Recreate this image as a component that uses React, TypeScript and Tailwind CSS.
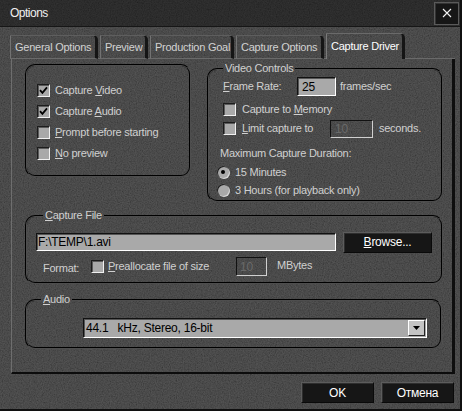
import type { ReactNode } from "react";

function Key({ children }: { children: ReactNode }) {
  return <span className="underline underline-offset-[1px]">{children}</span>;
}

function Check({ checked = false }: { checked?: boolean }) {
  return (
    <span className="flex h-[13px] w-[13px] shrink-0 items-center justify-center border border-t-[#1c1c1c] border-l-[#1c1c1c] border-r-[#f0f0f0] border-b-[#f0f0f0] bg-[#a9a9a9] shadow-[inset_1px_1px_0_#5a5a5a]">
      {checked && (
        <svg width="9" height="9" viewBox="0 0 9 9">
          <path d="M1 4.2 L3.4 6.8 L8 1.4" stroke="#000" strokeWidth="1.8" fill="none" />
        </svg>
      )}
    </span>
  );
}

function Radio({ on = false }: { on?: boolean }) {
  return (
    <span className="flex h-[12px] w-[12px] shrink-0 items-center justify-center rounded-full bg-[#a9a9a9] shadow-[inset_1px_1px_0_#1c1c1c,1px_1px_0_#d8d8d8]">
      {on && <span className="h-[4px] w-[4px] rounded-full bg-black" />}
    </span>
  );
}

function Tab({ label, w, active = false }: { label: string; w: string; active?: boolean }) {
  return active ? (
    <div
      className={`flex h-[26px] ${w} shrink-0 items-center rounded-tr-[5px] border-t border-l border-r-[3px] border-t-[#6a6a6a] border-l-[#7a7a7a] border-r-[#151515] pl-[4px] pb-px text-white`}
    >
      {label}
    </div>
  ) : (
    <div
      className={`flex h-[24px] ${w} shrink-0 items-center rounded-tr-[5px] border-t border-l border-r-[3px] border-b border-t-[#5e5e5e] border-l-[#727272] border-r-[#151515] border-b-[#6a6a6a] pl-[4px] text-[#d2d2d2]`}
    >
      {label}
    </div>
  );
}

function Gap({ grow = false }: { grow?: boolean }) {
  return <div className={`${grow ? "flex-1" : "w-[2px]"} border-b border-[#6a6a6a]`} />;
}

function Button({ children, w }: { children: ReactNode; w: string }) {
  return (
    <button
      className={`flex h-[21px] ${w} items-center justify-center border border-t-[#5c5c5c] border-l-[#5c5c5c] border-r-[#0a0a0a] border-b-[#0a0a0a] bg-[#161616] text-[12px] text-white shadow-[inset_1px_1px_0_#2e2e2e]`}
    >
      <span>{children}</span>
    </button>
  );
}

const field = "border-2 border-[#4e4e4e] [border-style:groove]";

export default function App() {
  return (
    <div className="relative h-[411px] w-[462px] overflow-hidden bg-[#2c2c2c] font-['Liberation_Sans',Arial,sans-serif] text-[11px] tracking-[-0.25px] text-[#d0d0d0] select-none">
      {/* granite skin */}
      <svg className="pointer-events-none absolute inset-0 h-full w-full" aria-hidden="true">
        <filter id="grain">
          <feTurbulence type="fractalNoise" baseFrequency="0.85" numOctaves="2" seed="3" stitchTiles="stitch" />
          <feColorMatrix type="matrix" values="1 0 0 0 0  1 0 0 0 0  1 0 0 0 0  0 0 0 0 1" />
        </filter>
        <rect width="100%" height="100%" filter="url(#grain)" opacity="0.21" />
      </svg>

      <div className="relative flex h-full flex-col border-r-2 border-b-2 border-r-[#101010] border-b-[#101010]">
        {/* title bar */}
        <div className="flex h-[27px] shrink-0 items-center justify-between border-b border-[#161616] bg-black/40 pl-[10px] pr-px">
          <span className="text-[12px] tracking-[-0.5px] text-[#f0f0f0]">Options</span>
          <span className="flex h-[23px] w-[25px] items-center justify-center border border-[#5a5a5a] bg-[#161616] shadow-[inset_1px_1px_0_#333]">
            <svg width="10" height="10" viewBox="0 0 10 10">
              <path d="M1 1 L9 9 M9 1 L1 9" stroke="#f2f2f2" strokeWidth="1.1" />
            </svg>
          </span>
        </div>

        {/* tabs */}
        <div className="ml-[10px] flex h-[32px] w-[445px] shrink-0 items-end">
          <Tab label="General Options" w="w-[88px]" />
          <Gap />
          <Tab label="Preview" w="w-[48px]" />
          <Gap />
          <Tab label="Production Goal" w="w-[84px]" />
          <Gap />
          <Tab label="Capture Options" w="w-[88px]" />
          <Gap />
          <Tab label="Capture Driver" w="w-[79px]" active />
          <Gap grow />
        </div>

        {/* tab page */}
        <div className="ml-[11px] flex h-[315px] w-[444px] shrink-0 flex-col border-l border-r-[3px] border-b-2 border-l-[#6e6e6e] border-r-[#0e0e0e] border-b-[#0c0c0c] pt-[5px] pl-[13px]">
          <div className="flex items-start gap-[16px]">
            <div className={`flex h-[113px] w-[166px] flex-col gap-[8px] rounded-[10px] pt-[18px] pl-[10px] ${field}`}>
              <label className="flex h-[13px] items-center gap-[5px]">
                <Check checked />
                <span>
                  Capture <Key>V</Key>ideo
                </span>
              </label>
              <label className="flex h-[13px] items-center gap-[5px]">
                <Check checked />
                <span>
                  Capture <Key>A</Key>udio
                </span>
              </label>
              <label className="flex h-[13px] items-center gap-[5px]">
                <Check />
                <span>
                  <Key>P</Key>rompt before starting
                </span>
              </label>
              <label className="flex h-[13px] items-center gap-[5px]">
                <Check />
                <span>
                  <Key>N</Key>o preview
                </span>
              </label>
            </div>

            <fieldset className={`-mt-[2px] h-[140px] w-[236px] rounded-[10px] ${field}`}>
              <legend className="ml-[14px] px-[2px] leading-[13px]">Video Controls</legend>
              <div className="mt-[2px] flex h-[19px] items-center pl-[14px]">
                <span className="w-[74px]">
                  <Key>F</Key>rame Rate:
                </span>
                <span className="flex h-[19px] w-[39px] items-center border border-t-[#111] border-l-[#111] border-r-white border-b-white bg-[#a9a9a9] pl-[4px] text-[12px] text-black shadow-[inset_1px_1px_0_#555]">
                  25
                </span>
                <span className="ml-[4px]">frames/sec</span>
              </div>
              <label className="mt-[4px] flex h-[19px] items-center gap-[6px] pl-[14px]">
                <Check />
                <span>
                  Capture to <Key>M</Key>emory
                </span>
              </label>
              <div className="flex h-[19px] items-center pl-[14px]">
                <label className="flex w-[107px] items-center gap-[6px]">
                  <Check />
                  <span>
                    <Key>L</Key>imit capture to
                  </span>
                </label>
                <span className="flex h-[18px] w-[43px] items-center border border-t-[#111] border-l-[#111] border-r-[#d0d0d0] border-b-[#d0d0d0] pl-[4px] text-[12px] text-[#6a6a6a]">
                  10
                </span>
                <span className="ml-[6px]">seconds.</span>
              </div>
              <div className="mt-[6px] flex h-[18px] items-center pl-[11px]">Maximum Capture Duration:</div>
              <label className="mt-px flex h-[18px] items-center gap-[6px] pl-[8px]">
                <Radio on />
                <span>15 Minutes</span>
              </label>
              <label className="flex h-[18px] items-center gap-[6px] pl-[8px]">
                <Radio />
                <span>3 Hours (for playback only)</span>
              </label>
            </fieldset>
          </div>

          <fieldset className={`mt-[7px] h-[75px] w-[418px] rounded-[10px] ${field}`}>
            <legend className="ml-[16px] px-[2px] leading-[13px]">
              <Key>C</Key>apture File
            </legend>
            <div className="mt-[10px] flex h-[20px] items-center pl-[9px]">
              <span className="flex h-[18px] w-[300px] items-center border border-t-[#111] border-l-[#111] border-r-white border-b-white bg-[#a9a9a9] pl-px text-[12px] text-black shadow-[inset_1px_1px_0_#555]">
                F:\TEMP\1.avi
              </span>
              <span className="ml-[7px]">
                <Button w="w-[89px]">
                  <Key>B</Key>rowse...
                </Button>
              </span>
            </div>
            <div className="mt-[5px] flex h-[19px] items-center pl-[16px]">
              <span className="mt-[3px] w-[48px]">Format:</span>
              <label className="flex w-[145px] items-center gap-[4px]">
                <Check />
                <span>
                  <Key>P</Key>reallocate file of size
                </span>
              </label>
              <span className="flex h-[19px] w-[31px] items-center border border-t-[#111] border-l-[#111] border-r-[#d0d0d0] border-b-[#d0d0d0] pl-[3px] text-[12px] text-[#6a6a6a]">
                10
              </span>
              <span className="ml-[10px] -mt-[2px]">MBytes</span>
            </div>
          </fieldset>

          <fieldset className={`mt-[9px] h-[56px] w-[417px] rounded-[10px] ${field}`}>
            <legend className="ml-[14px] px-[2px] leading-[13px]">
              <Key>A</Key>udio
            </legend>
            <div className="mt-[12px] pl-[56px]">
              <div className="flex h-[20px] w-[344px] items-center justify-between border border-t-[#111] border-l-[#111] border-r-white border-b-white bg-[#a9a9a9] pl-[2px] pr-px text-[12px] text-black shadow-[inset_1px_1px_0_#555]">
                <span className="whitespace-pre">44.1   kHz, Stereo, 16-bit</span>
                <span className="flex h-[16px] w-[17px] items-center justify-center border border-t-white border-l-white border-r-[#222] border-b-[#222] bg-[#c4c4c4]">
                  <svg width="7" height="4" viewBox="0 0 7 4">
                    <path d="M0 0 H7 L3.5 4 Z" fill="#000" />
                  </svg>
                </span>
              </div>
            </div>
          </fieldset>
        </div>

        {/* dialog buttons */}
        <div className="flex flex-1 items-start justify-end gap-[7px] pt-[8px] pr-[6px]">
          <Button w="w-[73px]">OK</Button>
          <Button w="w-[73px]">Отмена</Button>
        </div>
      </div>
    </div>
  );
}
